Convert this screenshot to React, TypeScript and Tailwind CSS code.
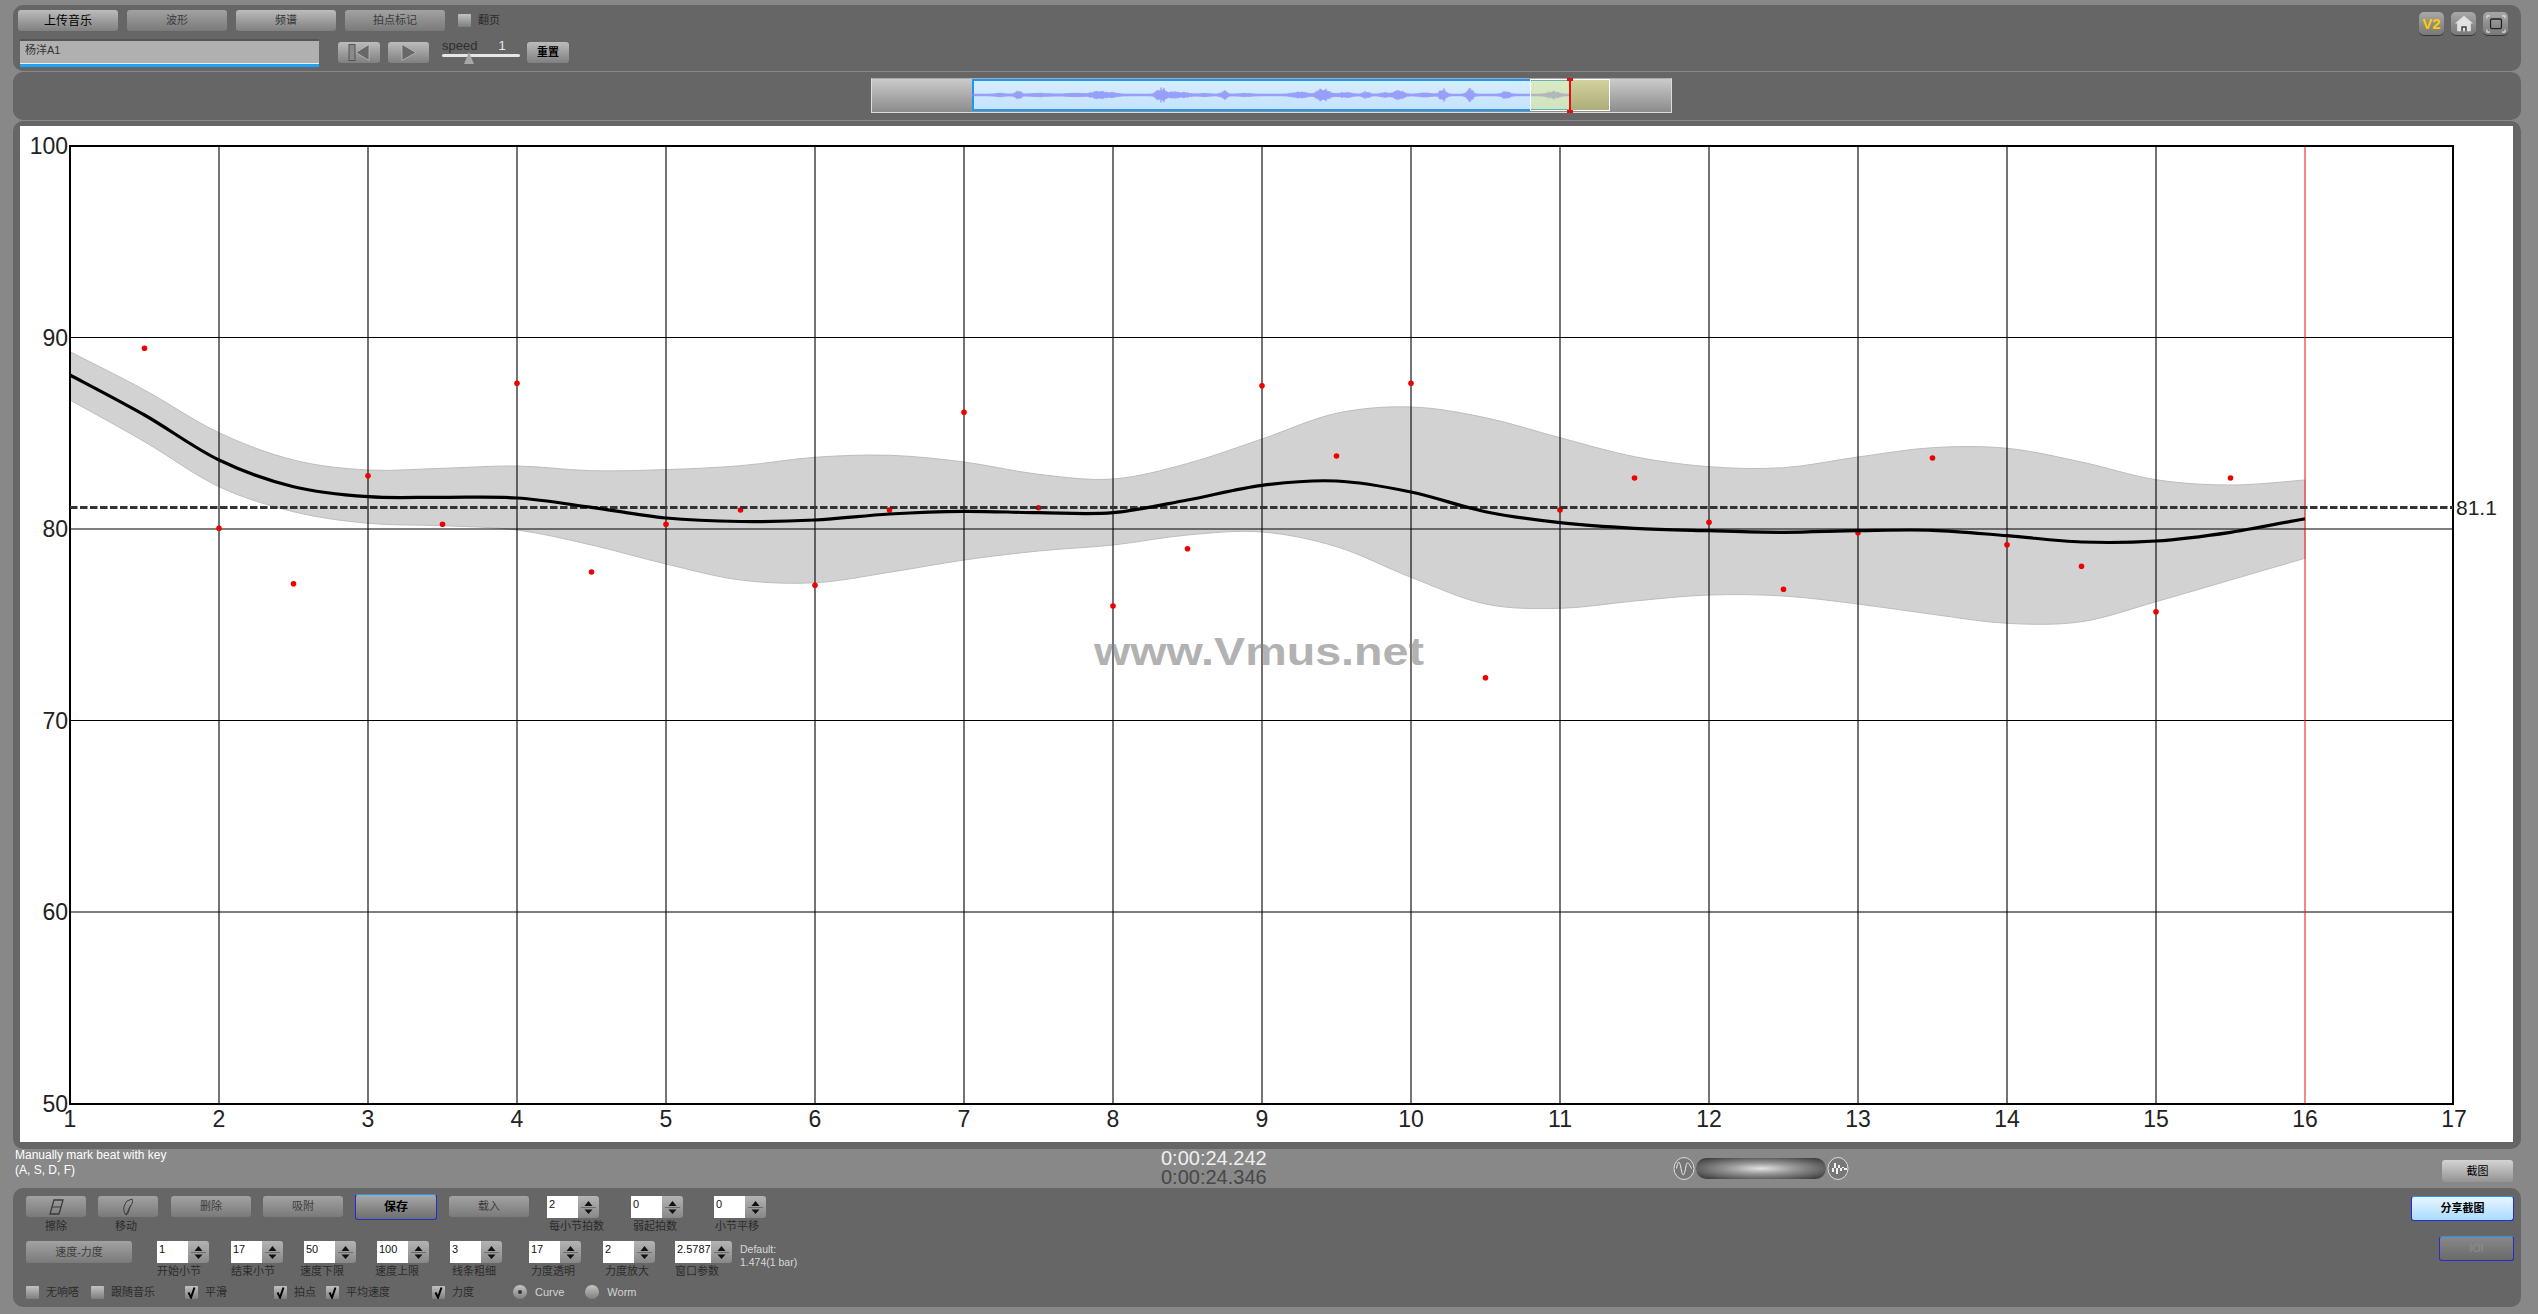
import type { ReactNode } from "react";

// chart data, in page pixels, one value per half beat from beat 1 to beat 16
const beatX = (i: number) => 70 + 74.5 * i;

const mean = [375, 415, 460, 486.7, 496.7, 497.3, 498, 507.3, 518, 521.5, 520, 514, 511.3, 512.7, 512.7, 500, 485.3, 481, 492, 511.7, 522.7, 528.3, 530.7, 532.3, 530.7, 530.3, 535.7, 542, 541, 532.3, 518.7];
const upper = [351.7, 390, 432.7, 460, 470, 468.3, 466, 470.7, 469.6, 465.7, 457.3, 455.3, 462, 474.3, 479, 463.5, 439, 413.3, 407, 417.7, 437.7, 456.7, 466.7, 467.7, 457, 447.7, 448.3, 462, 479.7, 485, 480];
const lower = [400, 441.7, 486.7, 511.7, 523.3, 525.7, 530, 545, 564, 580, 582.7, 572.3, 560, 551, 545, 535, 532, 546.7, 577.3, 604, 608.3, 601, 595, 596, 604, 614.3, 623.3, 621.7, 601.7, 580, 558.3];
const dots = [348.3, 528.3, 583.7, 475.7, 524.3, 383.3, 572, 524.3, 510, 585.3, 510, 412.3, 507.7, 606, 548.7, 385.7, 456, 383.3, 677.7, 510, 478, 522.3, 589.3, 532.7, 458, 544.7, 566.3, 611.7, 478];

function smooth(ys: number[], reverse = false) {
  const pts = ys.map((y, i) => [beatX(i), y]);
  if (reverse) pts.reverse();
  let d = "";
  pts.forEach((p, i) => {
    if (i === 0) {
      d += `${p[0]} ${p[1]}`;
      return;
    }
    const a = pts[Math.max(i - 2, 0)];
    const b = pts[i - 1];
    const c = pts[Math.min(i + 1, pts.length - 1)];
    d += ` C${b[0] + (p[0] - a[0]) / 6} ${b[1] + (p[1] - a[1]) / 6} ${p[0] - (c[0] - b[0]) / 6} ${p[1] - (c[1] - b[1]) / 6} ${p[0]} ${p[1]}`;
  });
  return d;
}

// overview wave form: bursts of [centre x, height, spread]
const bursts = [
  [1018, 3.5, 4], [1000, 1.2, 6], [1040, 1, 12], [1075, 1, 12], [1098, 3, 8], [1112, 1.5, 8], [1161, 7, 5], [1178, 2.5, 12],
  [1224, 3.5, 4], [1205, 1, 6], [1245, 1, 8], [1323, 6.5, 7], [1300, 2.5, 9], [1345, 2, 8], [1366, 3, 4], [1399, 4, 6],
  [1385, 1.5, 6], [1443, 5.5, 4], [1425, 1.5, 8], [1470, 5.5, 4], [1506, 3, 5], [1553, 3, 7],
];
function waveform() {
  let d = "";
  for (let x = 972; x < 1570; x += 1) {
    let amp = 0;
    for (const [c, h, s] of bursts) amp += h * Math.exp(-(((x - c) / s) ** 2));
    const n = Math.sin(x * 12.9898) * 43758.5453;
    amp *= 0.45 + 0.65 * (n - Math.floor(n));
    amp = Math.max(amp + 1.2, 1.2);
    d += `M${x - 972} ${16 - amp}V${16 + amp}`;
  }
  return d;
}

function Chart() {
  const beats = Array.from({ length: 15 }, (_, i) => i + 2);
  return (
    <svg viewBox="20 126 2493 1016" className="block w-[2493px] h-[1016px]">
      <path d={`M${smooth(upper)} L${smooth(lower, true)} Z`} fill="#d2d2d2" stroke="#bdbdbd" strokeWidth="1" />
      {[337.5, 529, 720.5, 912].map((y) => (
        <line key={y} x1="70" x2="2453" y1={y} y2={y} stroke="#000" strokeWidth="1.1" />
      ))}
      {beats.map((b) =>
        b === 16 ? (
          <line key={b} x1="2305" x2="2305" y1="146" y2="1104" stroke="#e81010" strokeWidth="1" />
        ) : (
          <line key={b} x1={70 + 149 * (b - 1)} x2={70 + 149 * (b - 1)} y1="146" y2="1104" stroke="#000" strokeWidth="1.1" />
        ),
      )}
      <rect x="70" y="146" width="2383" height="958" fill="none" stroke="#000" strokeWidth="2" />
      <text x="1094" y="665" textLength="330" lengthAdjust="spacingAndGlyphs" fontSize="39" fontWeight="700" fill="#808080" opacity="0.6">
        www.Vmus.net
      </text>
      {dots.map((y, i) => (
        <circle key={i} cx={beatX(i + 1)} cy={y} r="2.8" fill="#f00000" />
      ))}
      <line x1="70" x2="2453" y1="507.5" y2="507.5" stroke="#333" strokeWidth="3" strokeDasharray="7.5 2.5" />
      <path d={`M${smooth(mean)}`} fill="none" stroke="#000" strokeWidth="3.2" />
      {[100, 90, 80, 70, 60, 50].map((v, i) => (
        <text key={v} x="68" y={154 + i * 191.5} textAnchor="end" fontSize="23" fill="#222">
          {v}
        </text>
      ))}
      {[1, ...beats, 17].map((b) => (
        <text key={b} x={70 + 149 * (b - 1)} y="1127" textAnchor="middle" fontSize="23" fill="#222">
          {b}
        </text>
      ))}
      <text x="2456" y="515" fontSize="21" fill="#222">
        81.1
      </text>
    </svg>
  );
}

function Btn({ className, children, dim }: { className: string; children?: ReactNode; dim?: boolean }) {
  return (
    <div
      className={`flex items-center justify-center shrink-0 rounded-[3px] text-[11px] leading-none ${
        dim ? "bg-gradient-to-b from-[#a2a2a2] to-[#7a7a7a] text-[#3c3c3c]" : "bg-gradient-to-b from-[#bcbcbc] to-[#808080] text-[#333]"
      } ${className}`}
    >
      {children}
    </div>
  );
}

function Spinner({ value, label, wide, labelClass }: { value: string; label: string; wide?: boolean; labelClass?: string }) {
  return (
    <div className={`flex flex-col items-start shrink-0 ${wide ? "w-[57px]" : "w-[52px]"}`}>
      <div className="flex h-[22px]">
        <div className={`bg-white text-[11px] leading-[16px] text-[#111] pl-[2px] ${wide ? "w-[36px]" : "w-[31px]"}`}>{value}</div>
        <div className="w-[21px] flex flex-col items-center rounded-r-[3px] bg-gradient-to-b from-[#b4b4b4] to-[#888]">
          <svg viewBox="0 0 21 22" className="w-[21px] h-[22px]">
            <path d="M10.5 5 14.5 10H6.5Z" fill="#111" />
            <path d="M3 11.5H18" stroke="#6c6c6c" strokeWidth="1" />
            <path d="M10.5 18 14.5 13.5H6.5Z" fill="#111" />
          </svg>
        </div>
      </div>
      {label && <div className={`mt-[2px] text-[11px] leading-[13px] text-[#2b2b2b] whitespace-nowrap ${labelClass ?? ""}`}>{label}</div>}
    </div>
  );
}

function Check({ label, checked, className }: { label: string; checked?: boolean; className?: string }) {
  return (
    <div className={`flex items-center shrink-0 ${className ?? ""}`}>
      <div className="w-[13px] h-[13px] rounded-[1px] bg-gradient-to-b from-[#c2c2c2] to-[#7e7e7e]">
        {checked && (
          <svg viewBox="0 0 13 13" className="w-[13px] h-[13px]">
            <path d="M3.5 6.5 6 11.5 9.5 1.5" fill="none" stroke="#000" strokeWidth="2" />
          </svg>
        )}
      </div>
      <span className="ml-[7px] text-[11px] leading-[13px] text-[#2b2b2b]">{label}</span>
    </div>
  );
}

function Radio({ label, on, className }: { label: string; on?: boolean; className?: string }) {
  return (
    <div className={`flex items-center shrink-0 ${className ?? ""}`}>
      <div className="w-[14px] h-[14px] rounded-full flex items-center justify-center bg-gradient-to-b from-[#c4c4c4] to-[#808080]">
        {on && <div className="w-[4px] h-[4px] rounded-full bg-[#333]" />}
      </div>
      <span className="ml-[8px] text-[11px] leading-[13px] text-[#d4d4d4]">{label}</span>
    </div>
  );
}

function Tile({ children }: { children: ReactNode }) {
  return (
    <div className="w-[25px] h-[23px] rounded-[5px] flex items-center justify-center bg-gradient-to-b from-[#a8a8a8] to-[#787878] shadow-[0_1px_0_#333]">
      {children}
    </div>
  );
}

function TopBar() {
  return (
    <div className="h-[66px] shrink-0 rounded-[10px] bg-[#666] flex justify-between">
      <div>
        <div className="flex items-center gap-[9px] pl-[5px] pt-[5px]">
          <Btn className="w-[100px] h-[21px] text-[12px] !text-black">上传音乐</Btn>
          <Btn dim className="w-[100px] h-[21px]">波形</Btn>
          <Btn className="w-[100px] h-[21px]">频谱</Btn>
          <Btn dim className="w-[100px] h-[21px]">拍点标记</Btn>
          <Check label="翻页" className="ml-[4px]" />
        </div>
        <div className="flex items-start pl-[7px] mt-[8px]">
          <div className="w-[299px] h-[28px] bg-[#b0b0b0] border-t-2 border-[#555] border-b-[3px] border-b-[#1ea4f5] shadow-[inset_0_-1px_0_#eee] pl-[5px] text-[11px] leading-[18px] text-[#333]">
            杨洋A1
          </div>
          <Btn className="w-[42px] h-[21px] mt-[3px] ml-[19px]">
            <svg viewBox="0 0 42 21" className="w-[42px] h-[21px]">
              <rect x="11" y="2.5" width="6" height="16" fill="#8a8a8a" stroke="#555" strokeWidth="1" />
              <path d="M31 2.5V18.5L18 10.5Z" fill="#686868" stroke="#ccc" strokeWidth="0.6" />
            </svg>
          </Btn>
          <Btn className="w-[41px] h-[21px] mt-[3px] ml-[8px]">
            <svg viewBox="0 0 41 21" className="w-[41px] h-[21px]">
              <path d="M14 2.5V18.5L28 10.5Z" fill="#686868" stroke="#ccc" strokeWidth="0.6" />
            </svg>
          </Btn>
          <div className="relative w-[78px] ml-[13px] shrink-0">
            <div className="flex text-[13px] leading-[13px] text-[#2e2e2e]">
              <span>speed</span>
              <span className="ml-[21px] text-[#e8e8e8]">1</span>
            </div>
            <div className="mt-[2px] h-[3px] bg-[#e6e6e6] rounded-full" />
            <svg viewBox="0 0 12 12" className="absolute left-[21px] top-[13px] w-[12px] h-[12px]">
              <path d="M6 0 11 12H1Z" fill="#a8a8a8" />
            </svg>
          </div>
          <Btn className="w-[42px] h-[21px] mt-[3px] ml-[7px] font-bold !text-black">重置</Btn>
        </div>
      </div>
      <div className="flex gap-[7px] pr-[13px] pt-[7px]">
        <Tile>
          <span className="text-[15px] leading-none font-bold text-[#ffcc00]">V2</span>
        </Tile>
        <Tile>
          <svg viewBox="0 0 24 22" className="w-[22px] h-[20px]">
            <path d="M12 2 22 10.5H19.5V19H4.5V10.5H2Z" fill="#e2e2e2" />
            <path d="M9 19V13.5H15V19H13.3V15H10.7V19Z" fill="#444" />
          </svg>
        </Tile>
        <Tile>
          <svg viewBox="0 0 24 22" className="w-[22px] h-[20px]">
            <rect x="6" y="5.5" width="12" height="10.5" rx="1.5" fill="none" stroke="#222" strokeWidth="1.4" />
            <path d="M2 2H5.5M2 2V5M22 2H18.5M22 2V5M2 20H5.5M2 20V17M22 20H18.5M22 20V17" stroke="#ddd" strokeWidth="1.3" fill="none" />
          </svg>
        </Tile>
      </div>
    </div>
  );
}

function Overview() {
  return (
    <div className="h-[48px] shrink-0 mt-[1px] rounded-[10px] bg-[#666] pt-[6px] pl-[858px]">
      <div className="relative w-[801px] h-[35px] border border-[#dcdcdc] border-t-[#aaa] bg-gradient-to-b from-[#cbcbcb] to-[#8c8c8c]">
        <div className="relative ml-[100px] w-[598px] h-[32px] border-y-2 border-l-2 border-[#2196f3] bg-gradient-to-b from-[#d6edff] to-[#c4e3fd]">
          <svg viewBox="0 0 598 32" className="absolute -left-[2px] -top-[2px] w-[598px] h-[32px]">
            <path d={waveform()} stroke="#8686f6" strokeWidth="1" fill="none" />
          </svg>
        </div>
        <div className="absolute left-[658px] top-0 w-[80px] h-[32px] border border-white bg-[rgba(230,230,80,0.35)]" />
        <div className="absolute left-[697px] -top-[1px] w-[2px] h-[35px] bg-[#e01010]" />
        <div className="absolute left-[695px] -top-[1px] w-[6px] h-[3px] bg-[#e01010]" />
        <div className="absolute left-[695px] top-[31px] w-[6px] h-[3px] bg-[#e01010]" />
      </div>
    </div>
  );
}

function StatusStrip() {
  return (
    <div className="h-[39px] shrink-0 flex items-start pl-[2px]">
      <div className="w-[1146px] shrink-0 -mt-[1px] text-[12px] leading-[15px] text-white">
        <div>Manually mark beat with key</div>
        <div>(A, S, D, F)</div>
      </div>
      <div className="w-[105px] shrink-0 text-[20px] leading-[19px] whitespace-nowrap">
        <div className="text-[#efefef]">0:00:24.242</div>
        <div className="text-[#474747]">0:00:24.346</div>
      </div>
      <div className="flex items-center ml-[407px] mt-[8px] shrink-0">
        <svg viewBox="0 0 22 23" className="w-[22px] h-[23px]">
          <ellipse cx="11" cy="11.5" rx="10" ry="11" fill="#777" stroke="#ddd" strokeWidth="1" />
          <path d="M3.5 11.5C5 3 6.5 3 8 11.5S11 20 12.5 11.5 15.5 5 18.5 11.5" fill="none" stroke="#eee" strokeWidth="1" />
        </svg>
        <div className="w-[130px] h-[21px] mx-[1px] rounded-full bg-[radial-gradient(ellipse_at_center,#e4e4e4_0%,#9a9a9a_35%,#2e2e2e_100%)]" />
        <svg viewBox="0 0 22 23" className="w-[22px] h-[23px]">
          <ellipse cx="11" cy="11.5" rx="10" ry="11" fill="#777" stroke="#ddd" strokeWidth="1" />
          <path d="M5 8V15H7V6H9V17H11V8H13V14H15V10H17V13H20V11H5Z" fill="#f2f2f2" />
        </svg>
      </div>
      <Btn className="w-[71px] h-[22px] ml-[593px] mt-[11px] !from-[#d4d4d4] !to-[#949494] !text-black">截图</Btn>
    </div>
  );
}

function Controls() {
  return (
    <div className="h-[119px] shrink-0 rounded-[10px] bg-[#666] flex justify-between">
      <div className="pt-[8px]">
        <div className="flex items-start h-[45px] pl-[13px]">
          <div className="flex flex-col items-center w-[60px] shrink-0">
            <Btn dim className="w-[60px] h-[21px]">
              <svg viewBox="0 0 20 18" className="w-[20px] h-[18px]">
                <path d="M8 2H17L13 16H4Z" fill="none" stroke="#3a3a3a" strokeWidth="1.3" />
                <path d="M6 9H15" stroke="#3a3a3a" strokeWidth="1" />
              </svg>
            </Btn>
            <div className="mt-[3px] text-[11px] leading-[13px] text-[#2b2b2b]">擦除</div>
          </div>
          <div className="flex flex-col items-center w-[60px] shrink-0 ml-[12px]">
            <Btn dim className="w-[60px] h-[21px]">
              <svg viewBox="0 0 20 20" className="w-[20px] h-[20px]">
                <path d="M8 18C4 13 6 8 9 4L14 2C16 6 12 9 11 12M8 18L13 8M8 18C10 17 11 15 11 12" fill="none" stroke="#3a3a3a" strokeWidth="1" />
              </svg>
            </Btn>
            <div className="mt-[3px] text-[11px] leading-[13px] text-[#2b2b2b] -ml-[4px]">移动</div>
          </div>
          <Btn dim className="w-[80px] h-[21px] ml-[13px]">删除</Btn>
          <Btn dim className="w-[80px] h-[21px] ml-[12px]">吸附</Btn>
          <Btn className="w-[82px] h-[26px] -mt-[2px] ml-[12px] border border-[#2030d0] border-t-[#2196f3] !from-[#a8a8a8] !to-[#6e6e6e] font-bold text-[12px] !text-black">保存</Btn>
          <Btn dim className="w-[80px] h-[21px] ml-[12px]">载入</Btn>
          <div className="ml-[18px]">
            <Spinner value="2" label="每小节拍数" labelClass="ml-[2px]" />
          </div>
          <div className="ml-[32px]">
            <Spinner value="0" label="弱起拍数" labelClass="ml-[2px]" />
          </div>
          <div className="ml-[31px]">
            <Spinner value="0" label="小节平移" labelClass="ml-[1px]" />
          </div>
        </div>
        <div className="flex items-start h-[44px] pl-[13px]">
          <Btn dim className="w-[106px] h-[22px]">速度-力度</Btn>
          <div className="ml-[25px]">
            <Spinner value="1" label="开始小节" />
          </div>
          <div className="ml-[22px]">
            <Spinner value="17" label="结束小节" />
          </div>
          <div className="ml-[21px]">
            <Spinner value="50" label="速度下限" labelClass="-ml-[4px]" />
          </div>
          <div className="ml-[21px]">
            <Spinner value="100" label="速度上限" labelClass="-ml-[2px]" />
          </div>
          <div className="ml-[21px]">
            <Spinner value="3" label="线条粗细" labelClass="ml-[2px]" />
          </div>
          <div className="ml-[27px]">
            <Spinner value="17" label="力度透明" labelClass="ml-[2px]" />
          </div>
          <div className="ml-[22px]">
            <Spinner value="2" label="力度放大" labelClass="ml-[2px]" />
          </div>
          <div className="ml-[20px]">
            <Spinner value="2.5787" label="窗口参数" wide />
          </div>
          <div className="ml-[8px] mt-[2px] text-[10.5px] leading-[13px] text-[#d8d8d8] whitespace-nowrap">
            <div>Default:</div>
            <div>1.474(1 bar)</div>
          </div>
        </div>
        <div className="flex items-center h-[14px] pl-[13px]">
          <Check label="无响嗒" />
          <Check label="跟随音乐" className="ml-[12px]" />
          <Check label="平滑" checked className="ml-[30px]" />
          <Check label="拍点" checked className="ml-[47px]" />
          <Check label="平均速度" checked className="ml-[10px]" />
          <Check label="力度" checked className="ml-[42px]" />
          <Radio label="Curve" on className="ml-[39px]" />
          <Radio label="Worm" className="ml-[21px]" />
        </div>
      </div>
      <div className="flex flex-col items-end pt-[8px] pr-[7px]">
        <div className="w-[103px] h-[25px] flex items-center justify-center rounded-[3px] border border-[#2a2ad0] border-t-[#2196f3] bg-gradient-to-b from-[#e8f5ff] to-[#a8dcff] text-[11px] font-bold text-black">
          分享截图
        </div>
        <div className="w-[75px] h-[25px] mt-[15px] flex items-center justify-center rounded-[3px] border border-[#2a2ad0] border-t-[#2196f3] bg-gradient-to-b from-[#888] to-[#6a6a6a] text-[11px] text-[#8e8e8e]">
          IOI
        </div>
      </div>
    </div>
  );
}

export default function App() {
  return (
    <div className="w-[2538px] h-[1314px] overflow-hidden bg-[#888] pt-[5px] pl-[13px] pr-[17px] flex flex-col [font-family:'Liberation_Sans','Noto_Sans_CJK_SC',sans-serif]">
      <TopBar />
      <Overview />
      <div className="h-[1028px] shrink-0 mt-[1px] rounded-[10px] bg-[#666] pt-[5px] pl-[7px]">
        <div className="w-[2493px] h-[1016px] bg-white">
          <Chart />
        </div>
      </div>
      <StatusStrip />
      <Controls />
    </div>
  );
}
